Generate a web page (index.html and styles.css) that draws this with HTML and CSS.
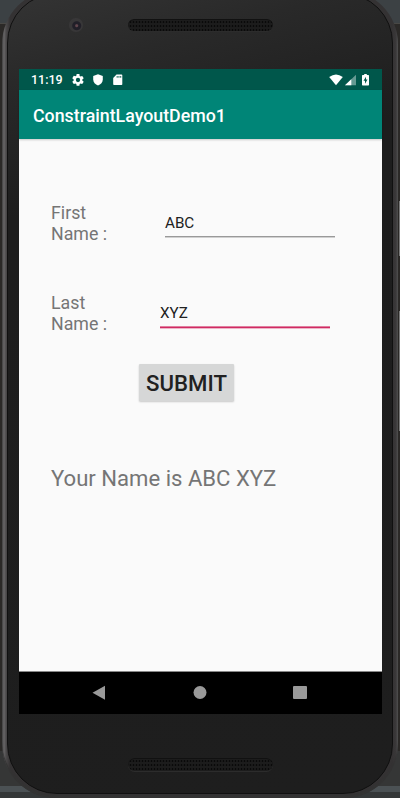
FILE: index.html
```html
<!DOCTYPE html>
<html lang="en">
<head>
<meta charset="utf-8">
<title>ConstraintLayoutDemo1</title>
<link rel="stylesheet" href="styles.css">
</head>
<body>
<div class="desktop">
  <i class="side power"></i><i class="side volume"></i>
  <div class="phone">
    <div class="bezel">
      <div class="top"><i class="camera"></i><i class="speaker"></i></div>
      <div class="screen">
        <header class="status">
          <span class="time">11:19</span>
          <svg class="gear" width="12" height="12" viewBox="2 2 20 20"><path fill="#fff" d="M19.14 12.94c.04-.3.06-.61.06-.94s-.02-.64-.07-.94l2.03-1.58a.5.5 0 0 0 .12-.61l-1.92-3.32a.49.49 0 0 0-.59-.22l-2.39.96a7 7 0 0 0-1.62-.94l-.36-2.54A.48.48 0 0 0 13.92 2h-3.84a.48.48 0 0 0-.48.41l-.36 2.54a7 7 0 0 0-1.62.94l-2.39-.96a.48.48 0 0 0-.59.22L2.72 8.87a.48.48 0 0 0 .12.61l2.03 1.58a6 6 0 0 0 0 1.88l-2.03 1.58a.5.5 0 0 0-.12.61l1.92 3.32c.12.22.37.29.59.22l2.39-.96c.5.38 1.03.7 1.62.94l.36 2.54c.05.24.24.41.48.41h3.84c.24 0 .44-.17.47-.41l.36-2.54a7 7 0 0 0 1.62-.94l2.39.96c.22.08.47 0 .59-.22l1.92-3.32a.48.48 0 0 0-.12-.61zM12 15.6a3.6 3.6 0 1 1 0-7.2 3.6 3.6 0 0 1 0 7.2z"/></svg>
          <svg class="shield" width="10" height="12" viewBox="0 0 10 12"><path fill="#fff" d="M5 .3 9.8 2v3.5C9.8 8.500 7.700 10.600 5 11.500 2.300 10.600.2 8.500.2 5.500V2z"/></svg>
          <svg class="card" width="10" height="12" viewBox="0 0 10 12"><path fill="#fff" fill-rule="evenodd" d="M3.500.5H8.500q.8 0 .8.8v9q0 .8-.8.8H1q-.8 0-.8-.8V4zM3.700 2v1.800h.9V2zm1.800 0v1.800h.9V2zm1.800 0v1.800h.9V2z"/></svg>
          <span class="grow"></span>
          <svg width="14" height="12" viewBox="0 0 14 12"><path fill="#fff" d="M.2 3Q7-2 13.800 3L7 11.200z"/></svg>
          <svg class="cell" width="11" height="12" viewBox="0 0 11 12"><path fill="#fff" opacity=".4" d="M11 .8v10.500H0z"/><path fill="#fff" d="M6.300 5.300v6H0z"/></svg>
          <svg class="battery" width="7" height="12" viewBox="0 0 7 12"><path fill="#fff" d="M2.200 0h2.600v1H6.300q.7 0 .7.7v9.100q0 .7-.7.7H.7q-.7 0-.7-.7V1.700Q0 1 .7 1h1.500z"/><path fill="#00574b" d="M4 2.700 1.500 6.800H3v3l2.500-4.200H4z"/></svg>
        </header>
        <div class="appbar">ConstraintLayoutDemo1</div>
        <main class="content">
          <div class="row"><div class="label">First<br>Name :</div><div class="field">ABC</div></div>
          <div class="row last"><div class="label">Last<br>Name :</div><div class="field active">XYZ</div></div>
          <button class="submit">SUBMIT</button>
          <div class="result">Your Name is ABC XYZ</div>
        </main>
        <nav class="nav">
          <svg width="14" height="16" viewBox="0 0 14 16"><path fill="#999" d="M13 .8v14L.5 7.800z"/></svg>
          <svg width="14" height="16" viewBox="0 0 14 16"><circle cx="7" cy="7.500" r="6.500" fill="#999"/></svg>
          <svg width="14" height="16" viewBox="0 0 14 16"><rect x="0" y="1" width="14" height="13" rx="1" fill="#999"/></svg>
        </nav>
      </div>
      <div class="bottom"><i class="speaker"></i></div>
    </div>
  </div>
</div>
</body>
</html>
```
FILE: styles.css
```css
* { box-sizing: border-box; }
body { margin: 0; font-family: Roboto, "Liberation Sans", sans-serif; }
svg { display: block; flex: none; }
.desktop {
  position: relative;
  height: 798px;
  overflow: hidden;
  padding: 0 2px;
  background: linear-gradient(#3c4144 0 23px, #494845 23px 24px, #2b2927 24px 751px, #353636 751px 786px, #4b5154 786px 792px, #343738 792px);
}
.side { position: absolute; right: 0; width: 1px; background: #777; }
.power { top: 201px; height: 55px; }
.volume { top: 311px; height: 120px; }
.phone {
  height: 808px;
  margin-top: -10px;
  padding: 3px 5px 3px 5px;
  border-radius: 54px;
  background: linear-gradient(90deg, #444 0, #686667 2px, #4c4a4b 4px, #343233 8px, #343233 390px, #3a3839 394px, #555 396px);
  box-shadow: inset 0 -3px 1px #333;
}
.bezel {
  height: 801px;
  display: flex;
  flex-direction: column;
  border: 1px solid #101010;
  border-radius: 50px;
  background: linear-gradient(165deg, #343434 0, #292929 10%, #1d1d1d 25%, #1e1e1e);
}
.top { height: 75px; flex: none; display: flex; padding: 25px 0 0 61px; }
.camera {
  width: 14px; height: 14px; margin-top: -1px; border-radius: 50%;
  background: radial-gradient(circle at 55% 55%, #62464d 0 1px, #211f28 2px 4px, #383738 5px);
}
.speaker {
  width: 145px; height: 13px; border-radius: 7px;
  background: radial-gradient(circle, #0a0a0a 0.7px, transparent 1.2px) 1px 1px / 3px 4px, #1c1c1c;
  box-shadow: 0 1px 0 #2c2c2c, inset 0 1px 0 #111;
}
.top .speaker { margin: 0 0 0 45px; height: 12px; }
.screen {
  width: 363px; height: 645px; flex: none; margin-left: 11px;
  display: flex; flex-direction: column; background: #fafafa;
}
.status {
  height: 21px; flex: none; display: flex; align-items: center;
  padding: 0 13px 0 12px; background: #00574b; color: #fff;
}
.time { font-size: 12.5px; font-weight: 500; width: 41px; white-space: nowrap; }
.shield { margin-left: 9px; }
.card { margin-left: 10px; }
.grow { flex: 1; }
.cell { margin-left: 2px; }
.battery { margin-left: 6px; }
.appbar {
  height: 49px; flex: none; padding: 1px 0 0 14px; line-height: 49px;
  font-size: 17.8px; font-weight: 500; color: #fff; background: #008577;
  box-shadow: 0 1px 2px rgba(0, 0, 0, 0.2);
}
.content { height: 533px; flex: none; padding: 64px 0 0 32px; border-bottom: 1px solid #888; }
.row { height: 90px; display: flex; }
.label { width: 114px; margin-top: -1px; font-size: 17.8px; line-height: 21px; color: #757575; }
.last .label { width: 109px; }
.field {
  width: 170px; height: 34px; padding-top: 11px; font-size: 15.2px; line-height: 18px;
  color: #212121; border-bottom: 1px solid #999; box-shadow: 0 1px 0 #d0d0d0;
}
.field.active { height: 35px; border-bottom-color: #d02a62; box-shadow: 0 1px 0 #edb5c8, inset 0 -1px 0 #e07f9f; }
.submit {
  display: block; width: 95px; height: 37px; margin: -19px 0 0 88px; padding: 1px 0 0;
  border: 0; border-radius: 1px; background: #d6d7d7; color: #212121;
  font: 500 22.2px Roboto, sans-serif; box-shadow: 0 1px 2px rgba(0, 0, 0, 0.2);
}
.result { margin-top: 63px; font-size: 22.1px; line-height: 28px; color: #757575; white-space: nowrap; }
.nav {
  height: 42px; flex: none; display: flex; justify-content: space-between; align-items: center;
  padding: 0 75px 0 73px; background: #000;
}
.bottom { flex: 1; display: flex; justify-content: center; align-items: flex-start; padding: 44px 0 0; }
```
